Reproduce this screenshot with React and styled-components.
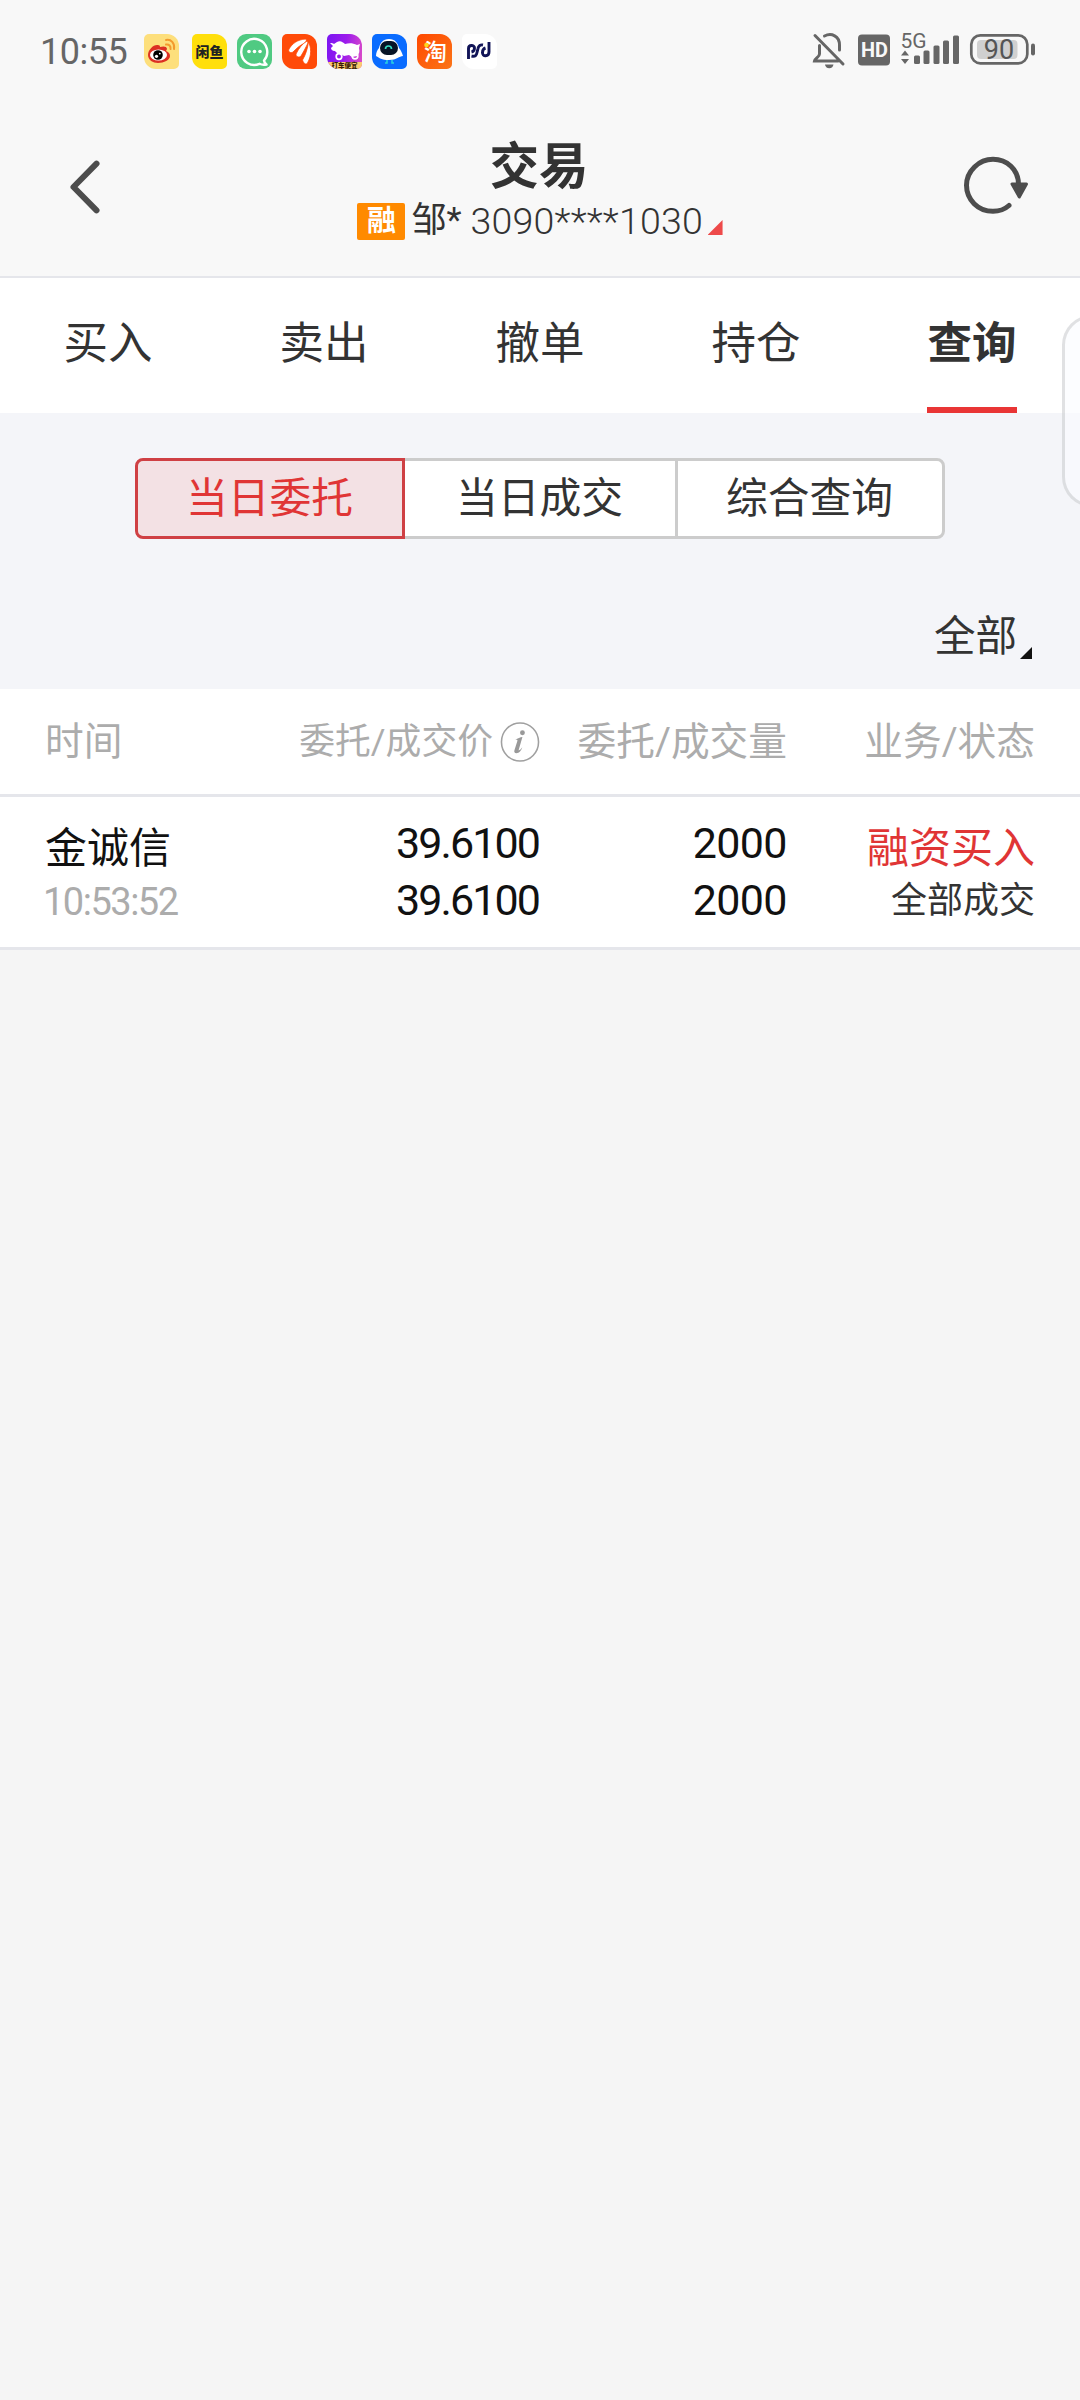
import styled, { createGlobalStyle, css } from 'styled-components';

const GlobalStyle = createGlobalStyle`
  * {
    box-sizing: border-box;
  }
  body {
    margin: 0;
    background-color: #f5f5f5;
    font-family: Roboto, "Noto Sans CJK SC", sans-serif;
    color: #333;
  }
`;

const Screen = styled.div`
  position: relative;
  width: 1080px;
  height: 2400px;
  overflow: hidden;
  background-color: #f5f5f5;
`;

const StatusBar = styled.div`
  display: flex;
  align-items: center;
  height: 103px;
  padding: 0 45px 0 40px;
  background-color: #f8f8f8;
  color: #666;
`;

const Clock = styled.div`
  width: 103.5px;
  font-size: 36px;
  line-height: 40px;
  letter-spacing: -0.5px;
`;

const AppIcons = styled.div`
  display: flex;
  gap: 10px;
  flex: 1;
`;

const AppIcon = styled.svg`
  display: block;
  width: 35px;
  height: 35px;
  border-radius: ${(props) => (props.$round ? '9px' : '5px 12px 5px 12px')};
  background: ${(props) => props.$bg};
  margin-right: ${(props) => props.$space || 0}px;
`;

const SystemIcons = styled.svg`
  display: block;
  width: 225px;
  height: 60px;
`;

const Header = styled.div`
  display: flex;
  justify-content: space-between;
  height: 175px;
  padding: 0 50px;
  background-color: #f8f8f8;
  border-bottom: 2px solid #e5e6eb;
`;

const HeaderIcon = styled.svg`
  display: block;
  width: 70px;
  height: 70px;
  margin-top: 52px;
`;

const HeaderCenter = styled.div`
  display: flex;
  flex-direction: column;
  align-items: center;
  padding-top: 34px;
`;

const Title = styled.div`
  margin-left: -2px;
  font-size: 49.5px;
  font-weight: 700;
  line-height: 60px;
`;

const Account = styled.div`
  display: flex;
  align-items: center;
  height: 38px;
  margin-top: 5px;
`;

const Badge = styled.div`
  width: 48px;
  height: 37px;
  margin-right: 6px;
  border-radius: 2px;
  background-color: #ff8a00;
  color: #fff;
  font-size: 29px;
  font-weight: 700;
  line-height: 36px;
  text-align: center;
`;

const AccountText = styled.span`
  font-size: 35px;
  line-height: 38px;
  white-space: nowrap;
`;

const AccountNumber = styled.span`
  width: 237px;
  margin-left: 9px;
  font-size: 37.5px;
  font-weight: 350;
  line-height: 38px;
  letter-spacing: 0.2px;
`;

const Corner = styled.div`
  width: ${(props) => props.$size}px;
  height: ${(props) => props.$size}px;
  align-self: flex-end;
  margin-bottom: ${(props) => props.$raise || 0}px;
  background-color: ${(props) => props.$color};
  clip-path: polygon(100% 0, 100% 100%, 0 100%);
`;

const Tabs = styled.div`
  display: flex;
  height: 135px;
  background-color: #fff;
`;

const Tab = styled.div`
  display: flex;
  flex: 1;
  flex-direction: column;
  align-items: center;
  justify-content: space-between;
  padding-top: 34px;
  font-size: 44.5px;
  line-height: 64px;
  ${(props) =>
    props.$active &&
    css`
      font-weight: 700;
      &::after {
        content: '';
        width: 90px;
        height: 6px;
        background-color: #e93535;
      }
    `}
`;

const Filters = styled.div`
  display: flex;
  flex-direction: column;
  height: 276px;
  padding-top: 45px;
  background-color: #f4f5f9;
`;

const Segments = styled.div`
  display: flex;
  width: 810px;
  height: 81px;
  margin: 0 auto;
`;

const Segment = styled.div`
  width: 270px;
  padding-right: 1px;
  border: 3px solid #ccc;
  border-left-width: ${(props) => (props.$last ? 3 : 0)}px;
  border-right-width: ${(props) => (props.$last ? 3 : 0)}px;
  border-radius: ${(props) => (props.$last ? '0 8px 8px 0' : '0')};
  background-color: #fff;
  font-size: 41.8px;
  line-height: 75px;
  text-align: center;
  ${(props) =>
    props.$active &&
    css`
      border: 3px solid #cf4044;
      border-radius: 8px 0 0 8px;
      background-color: #f3e1e4;
      color: #e03535;
    `}
`;

const FilterSelect = styled.div`
  display: flex;
  align-self: flex-end;
  height: 53px;
  margin: 67px 48px 0 0;
  font-size: 41.5px;
  line-height: 61px;
  gap: 3px;
`;

const Row = styled.div`
  display: grid;
  grid-template-columns: 216px 279px 247px 248px;
  padding: 0 45px;
  background-color: #fff;
  border-bottom: 3px solid #e5e6eb;
`;

const TableHead = styled(Row)`
  align-items: center;
  height: 108px;
  color: #acacac;
  line-height: 56px;
`;

const HeadCell = styled.div`
  display: flex;
  align-items: center;
  justify-content: ${(props) => (props.$left ? 'flex-start' : 'flex-end')};
  font-size: ${(props) => (props.$small ? 35.8 : 38.7)}px;
  white-space: nowrap;
`;

const InfoIcon = styled.svg`
  width: 40px;
  height: 40px;
  margin-left: 7px;
`;

const OrderRow = styled(Row)`
  height: 153px;
  padding-top: 23px;
`;

const Cell = styled.div`
  display: flex;
  flex-direction: column;
  align-items: ${(props) => (props.$left ? 'flex-start' : 'flex-end')};
  color: #111;
`;

const Name = styled.div`
  font-size: 42px;
  line-height: 58px;
  color: ${(props) => props.$color || '#111'};
`;

const Time = styled.div`
  margin-left: -2px;
  color: #acacac;
  font-size: 38px;
  line-height: 48px;
  letter-spacing: -1.5px;
`;

const Figure = styled.div`
  height: 56.5px;
  font-size: 43px;
  line-height: 46px;
  letter-spacing: ${(props) => props.$spacing}px;
  margin-right: ${(props) => props.$spacing * -0.5}px;
`;

const Status = styled.div`
  color: #333;
  font-size: 36px;
  line-height: 46px;
`;

// Edge panel handle that floats over the page
const SidePanel = styled.div`
  position: absolute;
  top: 315px;
  left: 1062px;
  width: 60px;
  height: 192px;
  border: 3px solid rgba(0, 0, 0, 0.11);
  border-radius: 30px;
  background-color: rgba(250, 252, 255, 0.6);
`;

const tabs = ['买入', '卖出', '撤单', '持仓', '查询'];
const segments = ['当日委托', '当日成交', '综合查询'];

const NotificationIcons = () => (
  <AppIcons>
    <AppIcon viewBox="0 0 35 35" $bg="#fddf7c" $space={3}>
      <path d="M4 21c0-5 5-10 9-10 3 0 3 1 3 2 3-1 7-1 7 2l-1 2c3 1 4 3 4 5 0 4-6 7-12 7-5 0-10-3-10-8z" fill="#dc3023" />
      <ellipse cx="14.5" cy="21" rx="8.5" ry="5.6" fill="#fff" />
      <circle cx="14" cy="21" r="4.8" fill="#000" />
      <circle cx="12.5" cy="22.3" r="1.6" fill="#fff" />
      <circle cx="15.8" cy="19.6" r="0.9" fill="#fff" />
      <path d="M22 6c5-1 9 3 8 9M22 10.5c3-.5 5 1.5 4.500 4.500" fill="none" stroke="#f39a2d" strokeWidth="2" strokeLinecap="round" />
    </AppIcon>
    <AppIcon viewBox="0 0 35 35" $bg="#ffdf0c">
      <text x="17.5" y="22.5" fontSize="14" fontWeight="900" textAnchor="middle" fill="#222">闲鱼</text>
    </AppIcon>
    <AppIcon viewBox="0 0 35 35" $bg="#50ca82" $round>
      <path d="M27 26.5A13 13 0 1 0 22.500 29.800c2 1 4.500 1.200 7 .7-1.500-1-2.300-2.500-2.500-4z" fill="none" stroke="#fff" strokeWidth="2.4" strokeLinejoin="round" />
      <circle cx="12" cy="17.5" r="1.8" fill="#fff" />
      <circle cx="17.5" cy="17.5" r="1.8" fill="#fff" />
      <circle cx="23" cy="17.5" r="1.8" fill="#fff" />
    </AppIcon>
    <AppIcon viewBox="0 0 35 35" $bg="#ff4a08">
      <g fill="#fff" stroke="#ff4a08" strokeWidth="0.8">
        <path d="M7 15C10 10 15 5.500 24 5c1 1 0 3-1 4-5 2-8 5-12 9-2 1.500-5.500 0-4-3z" />
        <path d="M14 20C17 14 20 10 25 7c1 1 1 2 .5 3-2 4-4 8-6.500 12-1.500 2-5.500 1-5-2z" />
        <path d="M20.500 26c3-5 5-11 6-18 2.500 5 3.500 13-1 21-1 2-4 1-5-3z" />
      </g>
    </AppIcon>
    <AppIcon viewBox="0 0 35 35" $bg="linear-gradient(100deg, #7a15f2, #9d1cec 50%, #e04fc4)">
      <path d="M3 9c2 0 3 0 4 1l3-2c3-2 6 0 8 2 4-1 8-1 12 1l3-1-1 4c1 4 0 6-2 8l-5 1-3-2-5 1-3-2c-2 0-5-1-6-3-3 0-4-2-4-3l2-2z" fill="#fff" />
      <circle cx="12" cy="22.5" r="2.8" fill="none" stroke="#fff" strokeWidth="1.7" />
      <circle cx="28" cy="22" r="2.8" fill="none" stroke="#fff" strokeWidth="1.7" />
      <rect y="28" width="35" height="7" fill="#fbcb70" />
      <text x="17.5" y="34" fontSize="6.5" fontWeight="900" textAnchor="middle" fill="#3a1c08">打车便宜</text>
    </AppIcon>
    <AppIcon viewBox="0 0 35 35" $bg="#0a6cff">
      <path d="M17 5c6 0 9 4 10 9 2 2 3 5 4 8-4 0-6 4-14 4S8 24 4 22c0-3 1-6 3-8 1-5 4-9 10-9z" fill="#fff" />
      <rect x="8" y="7" width="18" height="14" rx="7" fill="#061427" />
      <path d="M13.5 15c0-4 6-4 6 0" fill="none" stroke="#35dcc0" strokeWidth="1.7" />
      <path d="M15 26v3h-2M20 26v3h2" fill="none" stroke="#29cfe0" strokeWidth="1.6" />
    </AppIcon>
    <AppIcon viewBox="0 0 35 35" $bg="linear-gradient(135deg, #ff4800, #fb7518)">
      <text x="18.5" y="26" fontSize="23" fontWeight="500" textAnchor="middle" fill="#fff">淘</text>
      <circle cx="9.5" cy="11" r="2.3" fill="#ffd81a" />
    </AppIcon>
    <AppIcon viewBox="0 0 35 35" $bg="#fff">
      <g fill="none" stroke="#111457" strokeWidth="2.9">
        <path d="M6.500 25V14.500c0-4 6-4 6-.5 0 2.500-1 3.500-3 4" />
        <path d="M9.500 22c4 1 5-1 5.500-3.500l1-4c.5-3 2.500-4 5-3.500" />
        <path d="M27 8v10c0 5-7 5-6.500.5 0-2 1.500-4 3-4.500" />
      </g>
    </AppIcon>
  </AppIcons>
);

const SystemStatus = () => (
  <SystemIcons viewBox="810 21.5 225 60">
    <g fill="none" stroke="#666" strokeWidth="3" strokeLinecap="round">
      <path d="M815 35l28 28.500M819.500 45v8.500c0 3-4.500 4.500-5 7h23.500M824.500 35.500c7-3.500 15 0 15 9v5" />
    </g>
    <path d="M825 64h8.500a4.300 4.300 0 0 1-8.500 0z" fill="#666" />
    <rect x="858" y="34" width="32" height="31" rx="4" fill="#666" />
    <text x="861" y="56.5" fontSize="20" fontWeight="700" fill="#f8f8f8" textLength="27" lengthAdjust="spacingAndGlyphs">HD</text>
    <text x="900.5" y="47" fontSize="21" fill="#666" textLength="26">5G</text>
    <path d="M901 55l4-5 4 5zM901 58.500l4 5 4-5z" fill="#666" />
    <g fill="#666">
      <rect x="914" y="55" width="6" height="8.5" rx="1.5" />
      <rect x="923.500" y="50" width="6" height="13.5" rx="1.5" />
      <rect x="933.500" y="45" width="6" height="18.5" rx="1.5" />
      <rect x="943" y="40" width="6" height="23.5" rx="1.5" />
      <rect x="953" y="35" width="6" height="28.5" rx="1.5" />
    </g>
    <rect x="971.3" y="34.8" width="56" height="28" rx="9" fill="none" stroke="#666" strokeWidth="2.7" />
    <rect x="977" y="39.5" width="40.5" height="19" rx="4" fill="#d0d0d0" />
    <rect x="1031" y="43" width="4" height="12" rx="2" fill="#666" />
    <text x="999" y="58.5" fontSize="27" textAnchor="middle" fill="#555">90</text>
  </SystemIcons>
);

const App = () => {
  return (
    <Screen>
      <GlobalStyle />
      <StatusBar>
        <Clock>10:55</Clock>
        <NotificationIcons />
        <SystemStatus />
      </StatusBar>
      <Header>
        <HeaderIcon viewBox="-18 0 70 70">
          <path d="M28.500 8.700L5.500 32l23 23.300" fill="none" stroke="#4d4d4d" strokeWidth="6" strokeLinecap="round" strokeLinejoin="round" />
        </HeaderIcon>
        <HeaderCenter>
          <Title>交易</Title>
          <Account>
            <Badge>融</Badge>
            <AccountText>邹*</AccountText>
            <AccountNumber>3090****1030</AccountNumber>
            <Corner $size={15} $raise={5} $color="#ee4a4a" />
          </Account>
        </HeaderCenter>
        <HeaderIcon viewBox="960 155 70 70">
          <path d="M1018.500 184.500C1018.500 169.500 1007 159.300 993 159.300S966.500 171 966.500 185.300S978 211.300 993 211.300C999 211.300 1004.500 209.500 1009 205.500" fill="none" stroke="#4d4d4d" strokeWidth="5" strokeLinecap="round" />
          <path d="M1012 184h14.500l-7.200 13z" fill="#4d4d4d" stroke="#4d4d4d" strokeWidth="3" strokeLinejoin="round" />
        </HeaderIcon>
      </Header>
      <Tabs>
        {tabs.map((tab) => (
          <Tab key={tab} $active={tab === '查询'}>{tab}</Tab>
        ))}
      </Tabs>
      <Filters>
        <Segments>
          {segments.map((name, i) => (
            <Segment key={name} $active={i === 0} $last={i === 2}>{name}</Segment>
          ))}
        </Segments>
        <FilterSelect>
          全部
          <Corner $size={12} $color="#111" />
        </FilterSelect>
      </Filters>
      <TableHead>
        <HeadCell $left>时间</HeadCell>
        <HeadCell $small>
          委托/成交价
          <InfoIcon viewBox="0 0 40 41">
            <ellipse cx="20" cy="20.5" rx="19" ry="19.5" fill="none" stroke="#a0a0a0" strokeWidth="1.6" />
            <circle cx="22.5" cy="11" r="2.5" fill="#999" />
            <path d="M15 18.500c3-2 5-3 7.500-3.200l-4 14c1.500-.3 2.500-1.500 3.800-3.300-.8 3.500-3.300 6-6 6-2 0-2.500-1.300-2-3l3-9.500c.4-1.400-.7-1.400-2.300-1z" fill="#999" />
          </InfoIcon>
        </HeadCell>
        <HeadCell>委托/成交量</HeadCell>
        <HeadCell>业务/状态</HeadCell>
      </TableHead>
      <OrderRow>
        <Cell $left>
          <Name>金诚信</Name>
          <Time>10:53:52</Time>
        </Cell>
        <Cell>
          <Figure $spacing={-1.9}>39.6100</Figure>
          <Figure $spacing={-1.9}>39.6100</Figure>
        </Cell>
        <Cell>
          <Figure $spacing={-0.7}>2000</Figure>
          <Figure $spacing={-0.7}>2000</Figure>
        </Cell>
        <Cell>
          <Name $color="#e03535">融资买入</Name>
          <Status>全部成交</Status>
        </Cell>
      </OrderRow>
      <SidePanel />
    </Screen>
  );
};

export default App;
